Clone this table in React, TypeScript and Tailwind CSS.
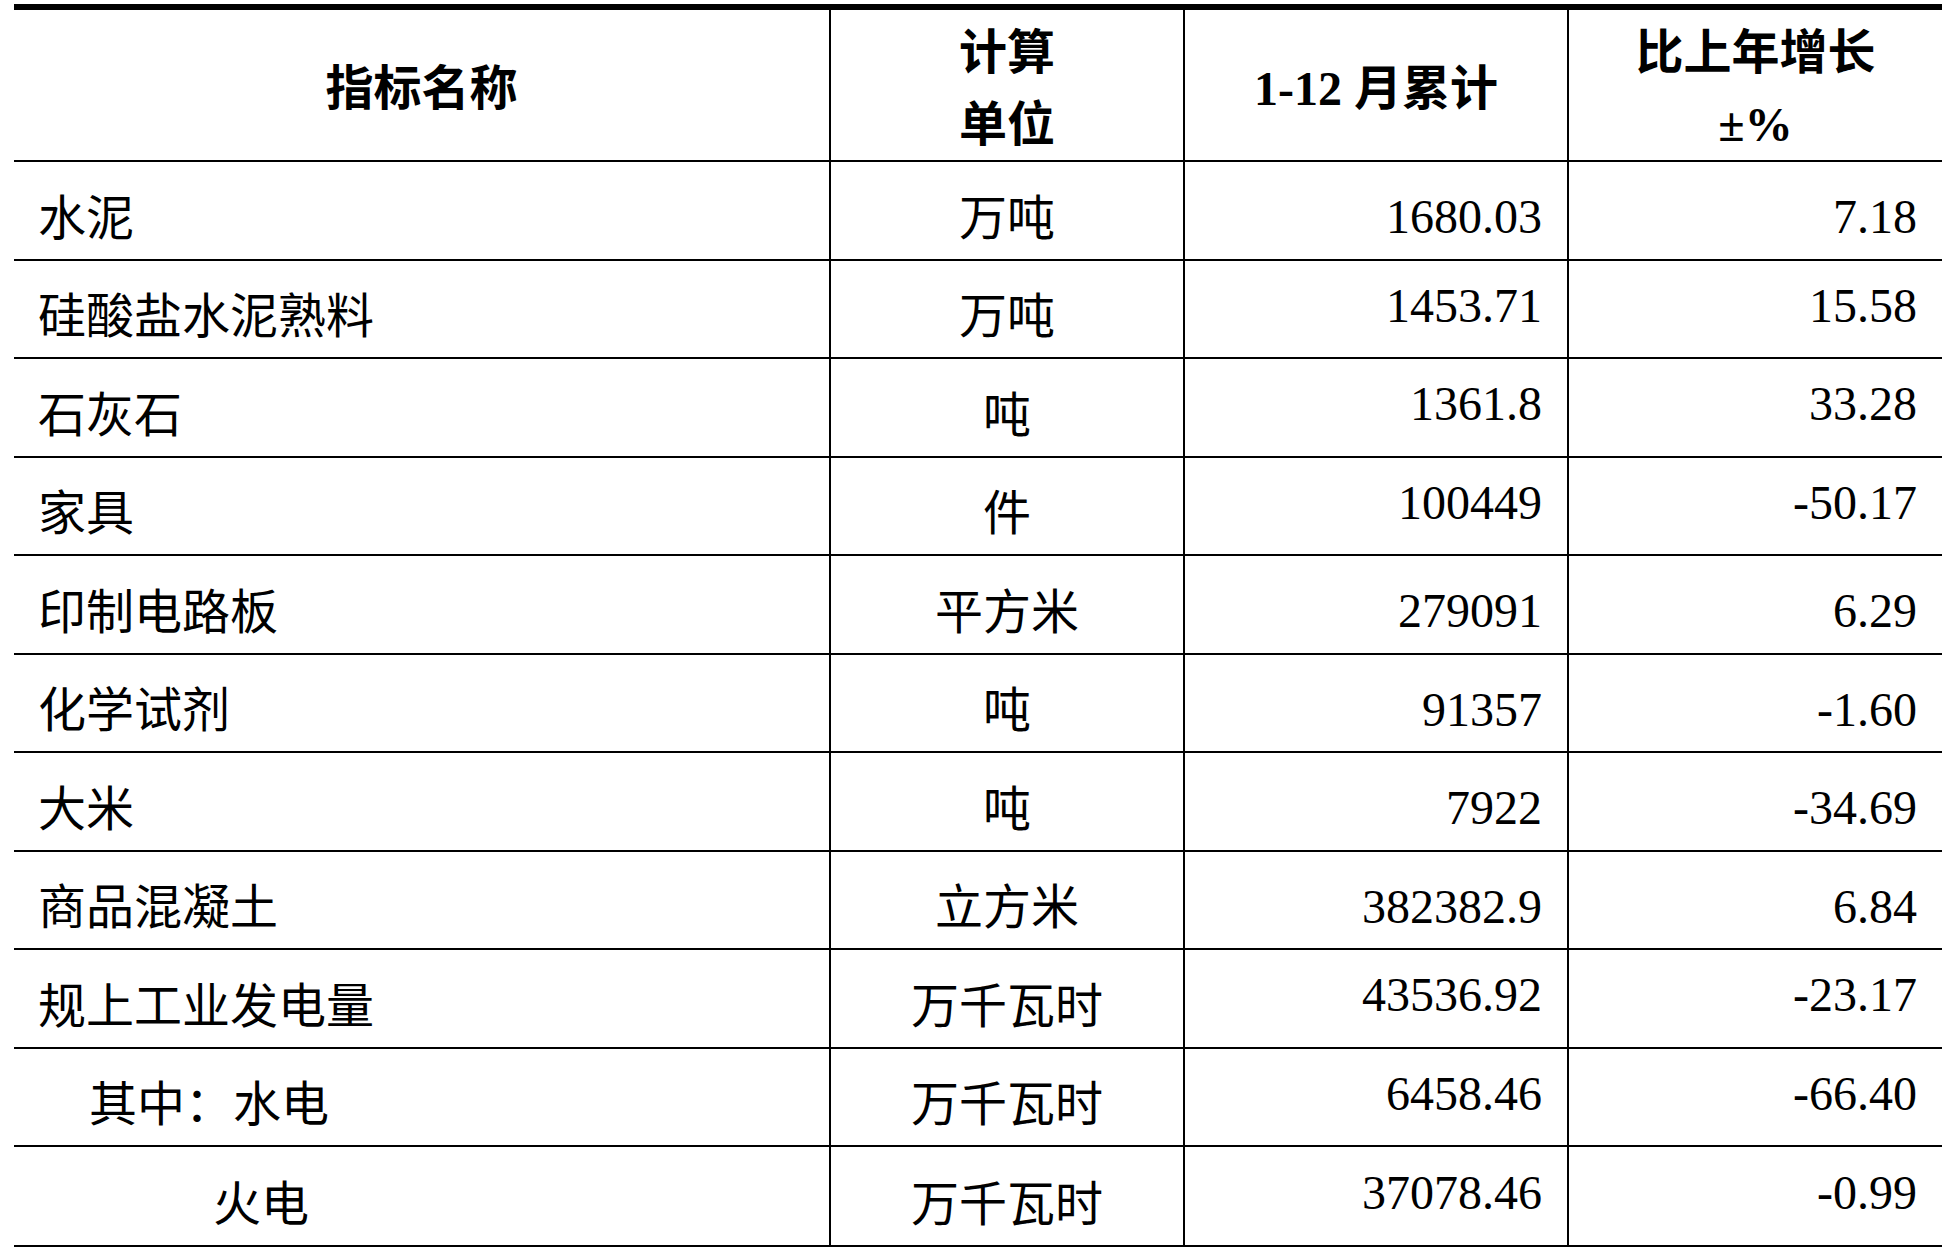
const rows = [
    { name: "水泥", unit: "万吨", total: "1680.03", growth: "7.18", indent: "pl-[24px]", num: "pt-[14px]" },
    { name: "硅酸盐水泥熟料", unit: "万吨", total: "1453.71", growth: "15.58", indent: "pl-[24px]", num: "pb-[6px]" },
    { name: "石灰石", unit: "吨", total: "1361.8", growth: "33.28", indent: "pl-[24px]", num: "pb-[6px]" },
    { name: "家具", unit: "件", total: "100449", growth: "-50.17", indent: "pl-[24px]", num: "pb-[6px]" },
    { name: "印制电路板", unit: "平方米", total: "279091", growth: "6.29", indent: "pl-[24px]", num: "pt-[14px]" },
    { name: "化学试剂", unit: "吨", total: "91357", growth: "-1.60", indent: "pl-[24px]", num: "pt-[14px]" },
    { name: "大米", unit: "吨", total: "7922", growth: "-34.69", indent: "pl-[24px]", num: "pt-[14px]" },
    { name: "商品混凝土", unit: "立方米", total: "382382.9", growth: "6.84", indent: "pl-[24px]", num: "pt-[14px]" },
    { name: "规上工业发电量", unit: "万千瓦时", total: "43536.92", growth: "-23.17", indent: "pl-[24px]", num: "pb-[6px]" },
    { name: "其中：水电", unit: "万千瓦时", total: "6458.46", growth: "-66.40", indent: "pl-[75px]", num: "pb-[6px]" },
    { name: "火电", unit: "万千瓦时", total: "37078.46", growth: "-0.99", indent: "pl-[199px]", num: "pb-[6px]" },
];

export default function App() {
    return (
        <div
            className="min-h-screen bg-white text-black pt-[4px] pl-[14px] overflow-hidden"
            style={{ fontFamily: '"Liberation Serif", "Noto Sans CJK SC", serif' }}
        >
            <div className="grid grid-cols-[815px_354px_384px_375px] border-t-[6px] border-black text-[48px]">
                {/* header */}
                <div className="h-[152px] border-b-2 border-black flex items-center justify-center pt-2 font-bold">
                    指标名称
                </div>
                <div className="h-[152px] border-b-2 border-l-2 border-black flex flex-col items-center justify-center pt-2 font-bold leading-[72px]">
                    <span>计算</span>
                    <span>单位</span>
                </div>
                <div className="h-[152px] border-b-2 border-l-2 border-black flex items-center justify-center pt-2 font-bold">
                    1-12 月累计
                </div>
                <div className="h-[152px] border-b-2 border-l-2 border-black flex flex-col items-center justify-center pt-2 font-bold leading-[72px]">
                    <span>比上年增长</span>
                    <span>±%</span>
                </div>

                {rows.map((r, i) => {
                    const last = i === rows.length - 1;
                    const rowCls = last ? "h-[104px] border-b-[6px]" : "h-[98.5px] border-b-2";
                    return [
                        <div key={r.name + "a"} className={`${rowCls} border-black flex items-center pt-[17px] ${r.indent}`}>
                            {r.name}
                        </div>,
                        <div key={r.name + "b"} className={`${rowCls} border-l-2 border-black flex items-center justify-center pt-[17px]`}>
                            {r.unit}
                        </div>,
                        <div key={r.name + "c"} className={`${rowCls} border-l-2 border-black flex items-center justify-end pr-[25px] ${r.num}`}>
                            {r.total}
                        </div>,
                        <div key={r.name + "d"} className={`${rowCls} border-l-2 border-black flex items-center justify-end pr-[25px] ${r.num}`}>
                            {r.growth}
                        </div>,
                    ];
                })}
            </div>
        </div>
    );
}
